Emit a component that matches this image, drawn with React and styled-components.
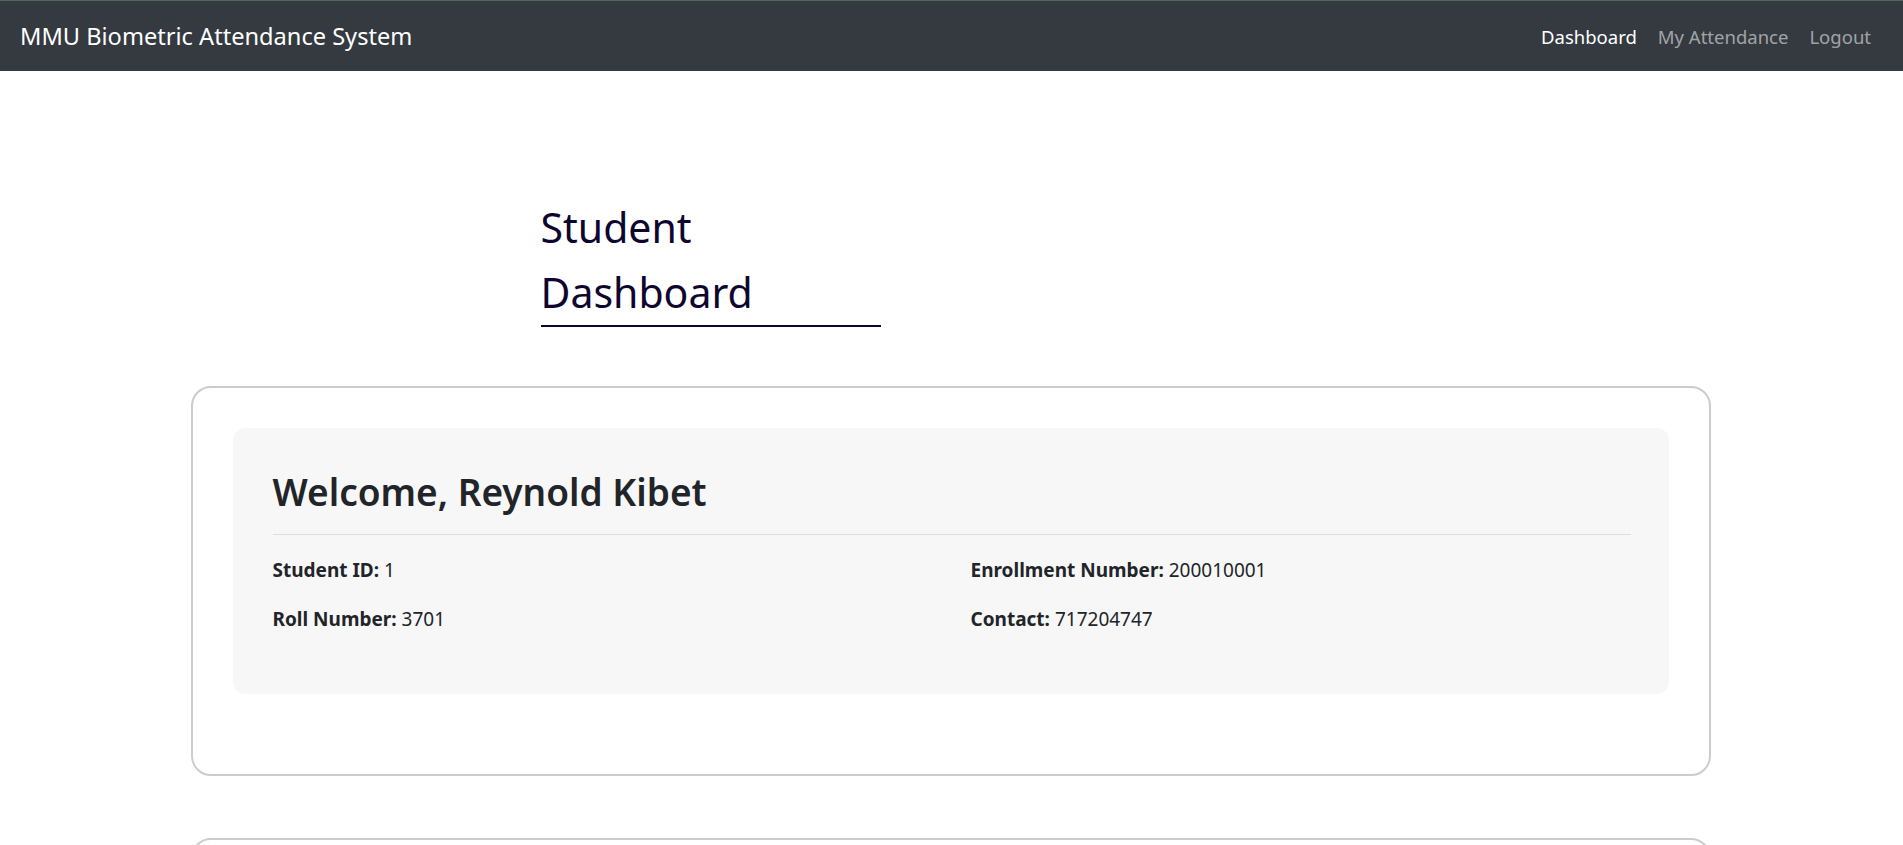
import React from "react"
import styled, { createGlobalStyle } from "styled-components"

const GlobalStyle = createGlobalStyle`
  html {
    overflow-y: scroll;
  }
  html::-webkit-scrollbar {
    width: 5px;
    background: #fafafa;
  }
  html::-webkit-scrollbar-thumb {
    background: #fafafa;
  }
  body {
    margin: 0;
    background: #fff;
    font-family: "Noto Sans", "Open Sans", sans-serif;
    color: #212529;
  }
  * {
    box-sizing: border-box;
  }
`

const Navbar = styled.nav`
  height: 71px;
  background: #343a40;
  border-top: 1px solid #55655a;
  display: flex;
  align-items: center;
  justify-content: space-between;
  padding: 0 32px 0 20px;
`

const Brand = styled.a`
  color: #fff;
  font-size: 23.6px;
  text-decoration: none;
`

const NavLinks = styled.div`
  display: flex;
  gap: 21px;
`

const NavLink = styled.a`
  color: ${props => (props.active ? "#fff" : "rgba(255, 255, 255, 0.55)")};
  font-size: 18.5px;
  text-decoration: none;
`

const Main = styled.main`
  padding: 124px 2px 40px 0;
  display: flex;
  flex-direction: column;
  align-items: center;
`

const HeadingWrap = styled.div`
  width: 1520px;
  padding-left: 350px;
  margin-bottom: 59px;
`

const PageTitle = styled.h1`
  width: 340px;
  margin: 0;
  font-size: 41px;
  font-weight: 400;
  line-height: 65px;
  color: #0f0630;
  border-bottom: 2px solid #0f0630;
`

const Card = styled.section`
  width: 1520px;
  min-height: ${props => props.minHeight || "auto"};
  border: 2px solid #cccccc;
  border-radius: 20px;
  padding: 40px 40px 80px;
  margin-bottom: 62px;
`

const InfoBox = styled.div`
  background: #f7f7f7;
  border-radius: 12px;
  padding: 42px 38px 60px 40px;
`

const Welcome = styled.h2`
  margin: 0 0 20px;
  font-size: 37px;
  font-weight: 600;
  line-height: 1.2;
  color: #212529;
`

const Divider = styled.hr`
  border: none;
  border-top: 1px solid #dedede;
  margin: 0 0 21px;
`

const InfoGrid = styled.div`
  display: grid;
  grid-template-columns: 1fr 1fr;
  column-gap: 38px;
  row-gap: 20px;
`

const InfoItem = styled.p`
  margin: 0;
  font-size: 19px;
  line-height: 29px;

  strong {
    font-weight: 700;
  }
`

const info = [
  { label: "Student ID", value: "1" },
  { label: "Enrollment Number", value: "200010001" },
  { label: "Roll Number", value: "3701" },
  { label: "Contact", value: "717204747" },
]

export default function App() {
  return (
    <>
      <GlobalStyle />
      <Navbar>
        <Brand href="#">MMU Biometric Attendance System</Brand>
        <NavLinks>
          <NavLink href="#" active>Dashboard</NavLink>
          <NavLink href="#">My Attendance</NavLink>
          <NavLink href="#">Logout</NavLink>
        </NavLinks>
      </Navbar>
      <Main>
        <HeadingWrap>
          <PageTitle>Student Dashboard</PageTitle>
        </HeadingWrap>
        <Card>
          <InfoBox>
            <Welcome>Welcome, Reynold Kibet</Welcome>
            <Divider />
            <InfoGrid>
              {info.map(item => (
                <InfoItem key={item.label}>
                  <strong>{item.label}:</strong> {item.value}
                </InfoItem>
              ))}
            </InfoGrid>
          </InfoBox>
        </Card>
        <Card minHeight="300px" />
      </Main>
    </>
  )
}
